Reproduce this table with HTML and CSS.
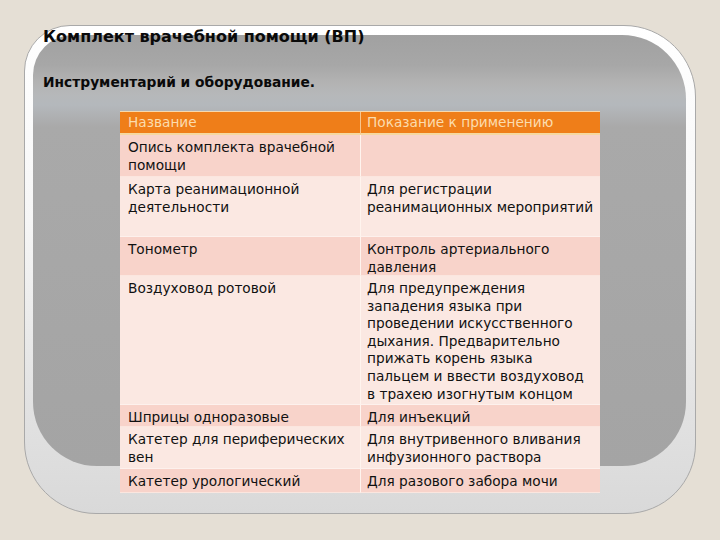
FILE: index.html
```html
<!DOCTYPE html>
<html lang="ru">
<head>
<meta charset="utf-8">
<title>Комплект врачебной помощи (ВП)</title>
<link rel="stylesheet" href="styles.css">
</head>
<body>
<div class="frame">
  <div class="content">
    <h1 class="title">Комплект врачебной помощи (ВП)</h1>
    <h2 class="subtitle">Инструментарий и оборудование.</h2>
    <div class="table">
      <div class="cell head">Название</div>
      <div class="cell head col2">Показание к применению</div>

      <div class="cell dark">Опись комплекта врачебной<br>помощи</div>
      <div class="cell dark col2"></div>

      <div class="cell light">Карта реанимационной<br>деятельности</div>
      <div class="cell light col2">Для регистрации<br>реанимационных мероприятий</div>

      <div class="cell dark">Тонометр</div>
      <div class="cell dark col2">Контроль артериального<br>давления</div>

      <div class="cell light">Воздуховод ротовой</div>
      <div class="cell light col2">Для предупреждения<br>западения языка при<br>проведении искусственного<br>дыхания. Предварительно<br>прижать корень языка<br>пальцем и ввести воздуховод<br>в трахею изогнутым концом</div>

      <div class="cell dark">Шприцы одноразовые</div>
      <div class="cell dark col2">Для инъекций</div>

      <div class="cell light">Катетер для периферических<br>вен</div>
      <div class="cell light col2">Для внутривенного вливания<br>инфузионного раствора</div>

      <div class="cell dark">Катетер урологический</div>
      <div class="cell dark col2">Для разового забора мочи</div>
    </div>
  </div>
</div>
</body>
</html>
```

FILE: styles.css
```css
html, body {
  margin: 0;
  padding: 0;
}

body {
  width: 720px;
  height: 540px;
  background: #e5dfd5;
  font-family: "DejaVu Sans", Verdana, sans-serif;
  color: #111;
  overflow: hidden;
}

.frame {
  position: relative;
  box-sizing: border-box;
  width: 672px;
  height: 489px;
  margin: 25px 0 0 24px;
  padding: 0 0 0 18px;
  border: 1px solid #a9a9a9;
  border-radius: 46px 72px 70px 72px;
  background: linear-gradient(to bottom, #ffffff 0%, #f6f6f6 40%, #e2e2e2 78%, #d9d9d9 100%);
}

.frame::before {
  content: "";
  position: absolute;
  top: 9px;
  left: 8px;
  right: 9px;
  bottom: 47px;
  border-radius: 40px 64px 64px 64px;
  background: linear-gradient(to bottom,
    #a1a1a1 0px,
    #a7a7a7 30px,
    #b3b3b3 48px,
    #b6b8ba 60px,
    #b4b8bc 70px,
    #a9a9a9 92px,
    #a4a4a4 100%);
}

.content {
  position: relative;
}

.title,
.subtitle {
  margin: 0;
  font-weight: bold;
  color: #0a0a0a;
}

.title {
  font-size: 16px;
  line-height: 19px;
  margin-top: 1px;
}

.subtitle {
  font-size: 13.8px;
  line-height: 17px;
  margin-top: 28px;
}

.table {
  display: grid;
  grid-template-columns: 240px 240px;
  grid-template-rows: 23px 42px 60px 39px 129px 22px 42px 24px;
  width: 480px;
  margin: 20px 0 0 77px;
  font-size: 13.7px;
  line-height: 17.6px;
  border-top: 1px solid #f6d9ae;
}

.cell {
  box-sizing: border-box;
  padding: 4px 2px 0 8px;
  white-space: nowrap;
  overflow: hidden;
}

.col2 {
  border-left: 1px solid #fff4ee;
  padding-left: 6px;
}

.head {
  background: #ef7e19;
  color: #fbdcae;
  padding-top: 2px;
  border-bottom: 2px solid #f6d8a0;
}

.head.col2 {
  border-left-color: #f7c58e;
}

.dark {
  background: #f8d3ca;
  border-bottom: 1px solid #fbe6df;
}

.light {
  background: #fbe8e2;
  border-bottom: 1px solid #fdf1ed;
}
```
